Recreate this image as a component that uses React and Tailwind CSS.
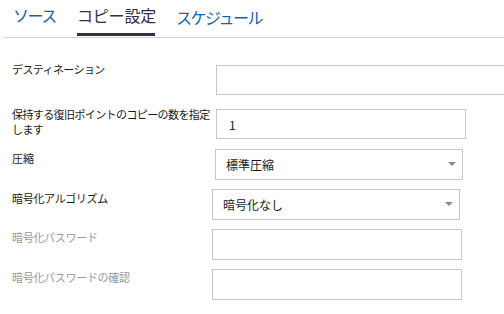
import React from 'react';

const Arrow = () => (
  <span className="absolute right-[6px] top-[12px] w-0 h-0 border-l-[4px] border-r-[4px] border-t-[4px] border-l-transparent border-r-transparent border-t-[#8a8a8a]" />
);

const App = () => {
  return (
    <div className="w-[504px] h-[314px] overflow-hidden bg-white text-[#1a1a1a]" style={{ fontFamily: '"Noto Sans CJK JP", "Noto Sans", sans-serif' }}>
      {/* Tabs */}
      <div className="flex items-end h-[37px] pl-[13px]">
        <div className="w-[64px] h-full flex flex-col justify-start pt-[5px]">
          <span className="text-[16px] leading-[20px] tracking-[-1.5px] text-[#1264ae]">ソース</span>
        </div>
        <div className="w-[99px] h-full flex flex-col items-start pt-[5px]">
          <span className="text-[16px] leading-[20px] tracking-[-0.2px] text-[#332e4d]">コピー設定</span>
          <span className="mt-auto mb-[1px] w-[78px] h-[3px] bg-[#332e4d]" />
        </div>
        <div className="h-full pt-[5px]">
          <span className="text-[16px] leading-[20px] tracking-[-1.5px] text-[#1264ae]">スケジュール</span>
        </div>
      </div>
      <div className="h-px bg-[#cfd3da] ml-[3px]" />

      {/* Form */}
      <div className="flex flex-col pt-[27px] pl-[12px] text-[11px] leading-[13px]">
        <div className="flex items-start">
          <div className="w-[204px] shrink-0 mt-[-2px] tracking-[-0.6px]">デスティネーション</div>
          <div className="w-[300px] h-[30px] shrink-0 border border-[#c8c8c8]" />
        </div>

        <div className="flex items-start mt-[14px]">
          <div className="w-[204px] shrink-0 mt-[-2px] tracking-[-0.6px] leading-[15px]">
            保持する復旧ポイントのコピーの数を指定<br />します
          </div>
          <div className="w-[250px] h-[30px] shrink-0 border border-[#c8c8c8] flex items-center pl-[12px] text-[12px]">1</div>
        </div>

        <div className="flex items-start mt-[10px]">
          <div className="w-[203px] shrink-0 mt-[3px]">圧縮</div>
          <div className="relative w-[248px] h-[31px] shrink-0 border border-[#c8c8c8] flex items-center pl-[10px] text-[12px]">
            標準圧縮
            <Arrow />
          </div>
        </div>

        <div className="flex items-start mt-[9px]">
          <div className="w-[200px] shrink-0 mt-[3px] tracking-[-0.3px]">暗号化アルゴリズム</div>
          <div className="relative w-[248px] h-[31px] shrink-0 border border-[#c8c8c8] flex items-center pl-[10px] text-[12px]">
            暗号化なし
            <Arrow />
          </div>
        </div>

        <div className="flex items-start mt-[9px] text-[#9a9a9a]">
          <div className="w-[200px] shrink-0 mt-[2px] tracking-[-0.3px]">暗号化パスワード</div>
          <div className="w-[250px] h-[31px] shrink-0 border border-[#c8c8c8]" />
        </div>

        <div className="flex items-start mt-[9px] text-[#9a9a9a]">
          <div className="w-[200px] shrink-0 mt-[2px] tracking-[-0.3px]">暗号化パスワードの確認</div>
          <div className="w-[250px] h-[31px] shrink-0 border border-[#c8c8c8]" />
        </div>
      </div>
    </div>
  );
};

export default App;
